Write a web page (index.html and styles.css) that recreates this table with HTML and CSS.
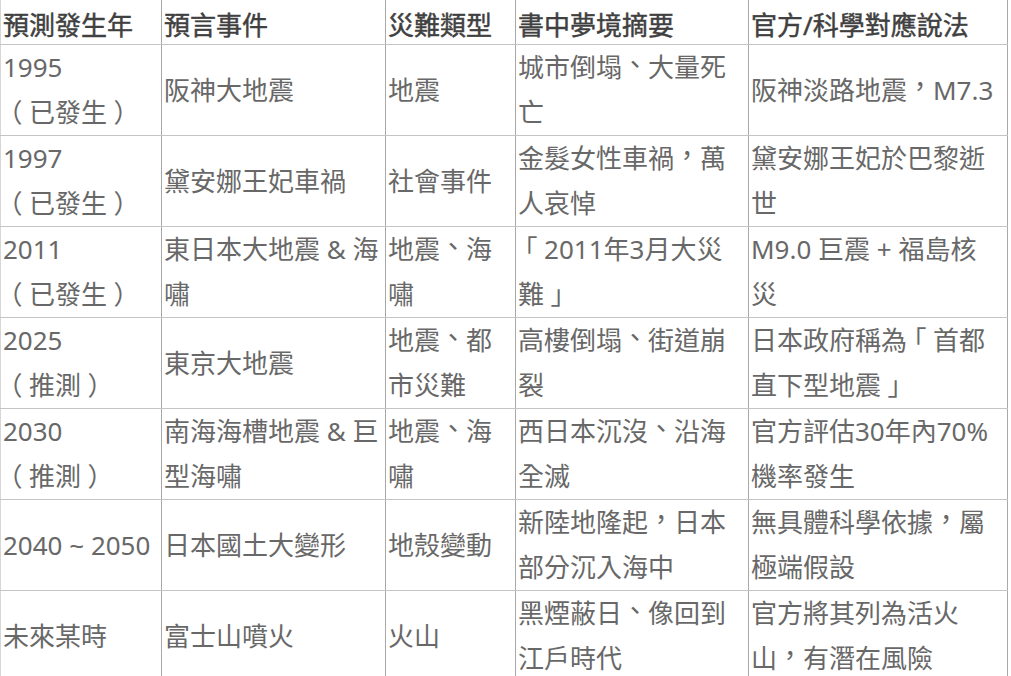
FILE: index.html
```html
<!DOCTYPE html>
<html lang="zh-TW">
<head>
<meta charset="utf-8">
<title>預言對照表</title>
<link rel="stylesheet" href="styles.css">
</head>
<body>
<table class="grid">
  <colgroup>
    <col class="c-year">
    <col class="c-event">
    <col class="c-type">
    <col class="c-dream">
    <col class="c-official">
  </colgroup>
  <thead>
    <tr>
      <th>預測發生年</th>
      <th>預言事件</th>
      <th>災難類型</th>
      <th>書中夢境摘要</th>
      <th class="last">官方/科學對應說法</th>
    </tr>
  </thead>
  <tbody>
    <tr>
      <td>1995<br><span class="pb">（</span>已發生<span class="pb">）</span></td>
      <td>阪神大地震</td>
      <td>地震</td>
      <td>城市倒塌<span class="pm">、</span>大量死亡</td>
      <td class="last">阪神淡路地震<span class="pm">，</span>M7.3</td>
    </tr>
    <tr>
      <td>1997<br><span class="pb">（</span>已發生<span class="pb">）</span></td>
      <td>黛安娜王妃車禍</td>
      <td>社會事件</td>
      <td>金髮女性車禍<span class="pm">，</span>萬人哀悼</td>
      <td class="last">黛安娜王妃於巴黎逝世</td>
    </tr>
    <tr>
      <td>2011<br><span class="pb">（</span>已發生<span class="pb">）</span></td>
      <td>東日本大地震 &amp; 海嘯</td>
      <td>地震<span class="pm">、</span>海嘯</td>
      <td><span class="pb">「</span>2011年3月大災難<span class="pb">」</span></td>
      <td class="last">M9.0 巨震 + 福島核災</td>
    </tr>
    <tr>
      <td>2025<br><span class="pb">（</span>推測<span class="pb">）</span></td>
      <td>東京大地震</td>
      <td>地震<span class="pm">、</span>都市災難</td>
      <td>高樓倒塌<span class="pm">、</span>街道崩裂</td>
      <td class="last">日本政府稱為<span class="pb">「</span>首都直下型地震<span class="pb">」</span></td>
    </tr>
    <tr>
      <td>2030<br><span class="pb">（</span>推測<span class="pb">）</span></td>
      <td>南海海槽地震 &amp; 巨型海嘯</td>
      <td>地震<span class="pm">、</span>海嘯</td>
      <td>西日本沉沒<span class="pm">、</span>沿海全滅</td>
      <td class="last">官方評估30年內70%機率發生</td>
    </tr>
    <tr>
      <td>2040 ~ 2050</td>
      <td>日本國土大變形</td>
      <td>地殼變動</td>
      <td>新陸地隆起<span class="pm">，</span>日本部分沉入海中</td>
      <td class="last">無具體科學依據<span class="pm">，</span>屬極端假設</td>
    </tr>
    <tr>
      <td>未來某時</td>
      <td>富士山噴火</td>
      <td>火山</td>
      <td>黑煙蔽日<span class="pm">、</span>像回到江戶時代</td>
      <td class="last">官方將其列為活火山<span class="pm">，</span>有潛在風險</td>
    </tr>
  </tbody>
</table>
</body>
</html>
```

FILE: styles.css
```css
html, body {
  margin: 0;
  padding: 0;
  background: #ffffff;
}

.grid {
  border-collapse: collapse;
  table-layout: fixed;
  width: 1007px;
  font-family: "Noto Sans", "Noto Sans CJK TC", sans-serif;
  font-size: 26px;
  color: #686868;
}

.c-year { width: 161px; }
.c-event { width: 224px; }
.c-type { width: 130px; }
.c-dream { width: 233px; }
.c-official { width: 259px; }

.grid th,
.grid td {
  border-left: 1px solid #a8a8a8;
  border-right: 1px solid #a8a8a8;
  border-bottom: 1px solid #c4c4c4;
  border-top: none;
  text-align: left;
  vertical-align: middle;
  overflow: hidden;
}

.grid th:first-child,
.grid td:first-child {
  border-left-color: #d6d6d6;
}

.grid th {
  font-weight: 400;
  color: #404040;
  -webkit-text-stroke: 0.45px #404040;
  line-height: 37px;
  padding: 7px 2px 0 2px;
}

.grid td {
  line-height: 45px;
  padding: 0 2px 0 2px;
  height: 90px;
  box-sizing: border-box;
}

.grid .last {
  padding-right: 12px;
}

/* Taiwan-style centred punctuation, kept inline so line-break rules still apply */
.pm,
.pb {
  font-feature-settings: "halt" 1;
  padding: 0 0.25em;
  line-height: 1;
}

.pm {
  vertical-align: 0.12em;
}
```
